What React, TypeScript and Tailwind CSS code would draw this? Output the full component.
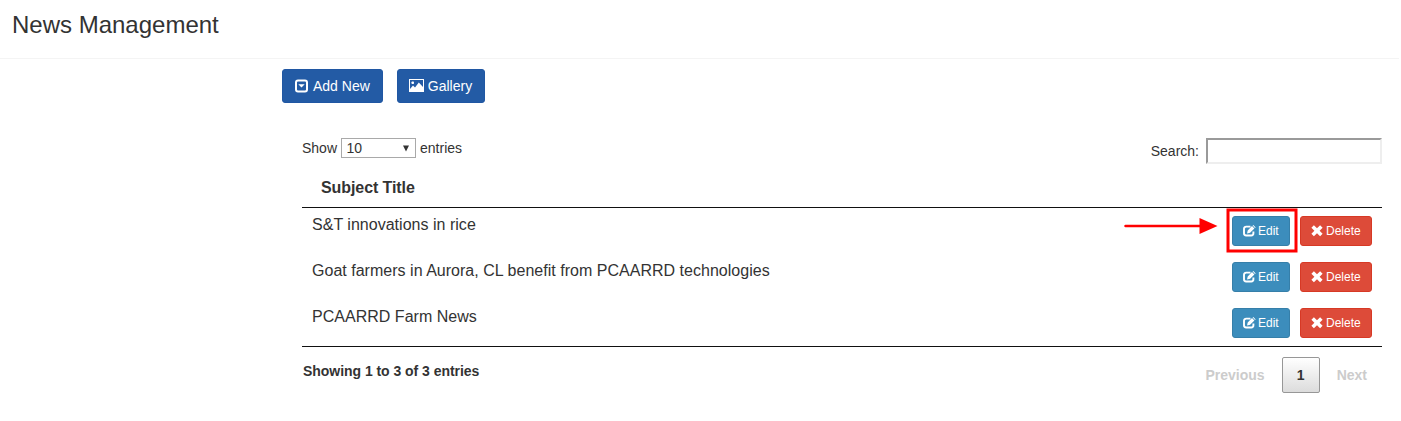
import type { ReactNode } from "react";

function CollapseIcon() {
  return (
    <svg width="15" height="14" viewBox="0 0 15 14" className="-ml-px shrink-0">
      <rect x="2" y="1.500" width="11" height="11" rx="2" fill="none" stroke="#fff" strokeWidth="2" />
      <path d="M4.300 5.200h6.400l-3.200 3.300z" fill="#fff" />
    </svg>
  );
}

function PictureIcon() {
  return (
    <svg width="15" height="14" viewBox="0 0 15 14" className="-ml-px shrink-0">
      <rect x="0.5" y="0.5" width="14" height="12" fill="none" stroke="#fff" />
      <path d="M1 12.500V10l3-3.500 2 2 3.800-5L14 8v4.500z" fill="#fff" />
      <rect x="2.500" y="2.500" width="2.500" height="2.500" rx=".8" fill="#fff" />
    </svg>
  );
}

function EditIcon() {
  return (
    <svg width="13" height="12" viewBox="0 0 13 12" className="shrink-0">
      <path d="M7.500 1.600H3.200A2.200 2.200 0 0 0 1 3.800V8.300A2.200 2.200 0 0 0 3.200 10.500h5A2.200 2.200 0 0 0 10.400 8.300V6.500" fill="none" stroke="#fff" strokeWidth="1.900" />
      <path d="M4 8.400l.7-3L9 1.100l2.400 2.400L7.100 7.800zM9.600.600l.7-.6 2.400 2.400-.7.600z" fill="#fff" />
    </svg>
  );
}

function RemoveIcon() {
  return (
    <svg width="12" height="12" viewBox="0 0 12 12" className="shrink-0">
      <path d="M2.900.300L6 3.300 9.100.300l2.500 2.500-3 3 3 3-2.500 2.500-3.100-3-3.100 3L.4 8.800l3-3-3-3z" fill="#fff" />
    </svg>
  );
}

function ToolbarButton({ icon, children }: { icon: ReactNode; children: ReactNode }) {
  return (
    <button className="flex h-[34px] items-center gap-1 rounded-[3px] border border-[#2057a3] bg-[#235ba5] px-3 text-sm whitespace-nowrap text-white">
      {icon}
      {children}
    </button>
  );
}

function EditButton() {
  return (
    <button className="flex h-[30px] w-[58px] items-center gap-[2px] rounded-[3px] border border-[#367fa9] bg-[#3c8dbc] pl-[10px] text-xs text-white">
      <EditIcon />
      Edit
    </button>
  );
}

function DeleteButton() {
  return (
    <button className="flex h-[30px] w-[72px] items-center gap-[3px] rounded-[3px] border border-[#d73925] bg-[#dd4b39] pl-[10px] text-xs text-white">
      <RemoveIcon />
      Delete
    </button>
  );
}

function EditPointer() {
  return (
    <svg width="176" height="46" viewBox="0 0 176 46" className="pointer-events-none absolute -top-2 -left-[110px]">
      <path d="M3.500 18h75" stroke="#f00" strokeWidth="2.500" strokeLinecap="round" />
      <path d="M77.500 10l18 8-18 8z" fill="#f00" />
      <rect x="106" y="2" width="68" height="41" fill="none" stroke="#f00" strokeWidth="3" />
    </svg>
  );
}

const articles = [
  "S&T innovations in rice",
  "Goat farmers in Aurora, CL benefit from PCAARRD technologies",
  "PCAARRD Farm News",
];

export default function App() {
  return (
    <div className="h-[421px] w-[1401px] overflow-hidden bg-white font-['Liberation_Sans',Arial,sans-serif] text-sm text-[#333]">
      <header className="mr-0.5 h-[59px] border-b border-[#f4f4f4] pt-[9px] pl-3">
        <h1 className="text-2xl leading-8">News Management</h1>
      </header>
      <div className="flex gap-[14px] pt-[10px] pl-[282px]">
        <ToolbarButton icon={<CollapseIcon />}>Add New</ToolbarButton>
        <ToolbarButton icon={<PictureIcon />}>Gallery</ToolbarButton>
      </div>
      <main className="ml-[302px] w-[1080px] pt-[35px]">
        <div className="flex h-[30px] items-start justify-between">
          <div className="flex h-5 items-center gap-1">
            Show
            <button className="flex h-5 w-[75px] items-center justify-between border border-[#a9a9a9] pr-[5px] pl-[4.5px]">
              10
              <svg width="8" height="7" viewBox="0 0 8 7">
                <path d="M1 .5h6L4 6.500z" fill="#333" />
              </svg>
            </button>
            entries
          </div>
          <label className="flex h-[26px] items-center gap-[7px]">
            Search:
            <input className="h-[26px] w-[176px] border-2 border-t-[#9a9a9a] border-r-[#eee] border-b-[#eee] border-l-[#9a9a9a] px-1 outline-none" />
          </label>
        </div>
        <div className="h-10 border-b border-[#111] pt-2 pl-[19px] text-base leading-[23px] font-bold tracking-[-0.08px]">Subject Title</div>
        <div className="border-b border-[#111]">
          {articles.map((title, index) => (
            <div key={title} className="flex h-[46px] items-start justify-between px-[10px] pt-2">
              <span className="text-base leading-[18px] tracking-[0.02px]">{title}</span>
              <div className="relative flex gap-[10px]">
                <EditButton />
                <DeleteButton />
                {index === 0 && <EditPointer />}
              </div>
            </div>
          ))}
        </div>
        <div className="flex justify-between pt-[10px] font-bold">
          <span className="pl-px leading-7 tracking-[-0.04px]">Showing 1 to 3 of 3 entries</span>
          <nav className="flex h-9 items-center text-[#ccc]">
            <span className="pr-[17px]">Previous</span>
            <button className="h-9 w-[38px] rounded-xs border border-[#979797] bg-linear-to-b from-white to-[#dcdcdc] text-[#333]">1</button>
            <span className="pr-[15px] pl-[17px]">Next</span>
          </nav>
        </div>
      </main>
    </div>
  );
}
